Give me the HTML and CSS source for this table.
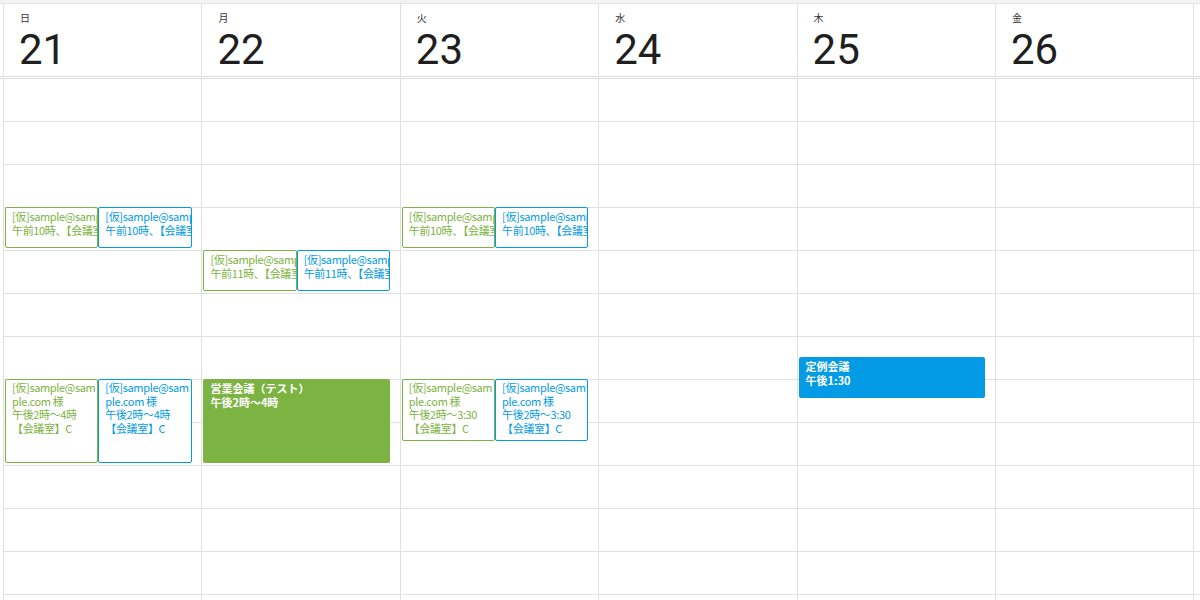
FILE: index.html
```html
<!DOCTYPE html>
<html lang="ja">
<head>
<meta charset="utf-8">
<title>週表示カレンダー</title>
<link rel="stylesheet" href="styles.css">
</head>
<body>
<div class="cal">
  <div class="head">
    <div class="gutter"></div>
    <div class="hcell"><div class="dow">日</div><div class="num">21</div></div>
    <div class="hcell"><div class="dow">月</div><div class="num">22</div></div>
    <div class="hcell"><div class="dow">火</div><div class="num">23</div></div>
    <div class="hcell"><div class="dow">水</div><div class="num">24</div></div>
    <div class="hcell"><div class="dow">木</div><div class="num">25</div></div>
    <div class="hcell"><div class="dow">金</div><div class="num">26</div></div>
    <div class="hcell"><div class="dow">土</div><div class="num">27</div></div>
  </div>
  <div class="grid">
    <div class="gutter"></div>
    <!-- 日 21 -->
    <div class="col">
      <div class="slot"></div><div class="slot"></div><div class="slot"></div><div class="slot"></div><div class="slot"></div><div class="slot"></div><div class="slot"></div><div class="slot"></div><div class="slot"></div><div class="slot"></div><div class="slot"></div><div class="slot"></div><div class="slot"></div>
      <div class="events">
        <div class="ev ev-out green short" style="top:128px;height:41px;left:0;width:50%">
          <div class="line">[仮]sample@sample.com 様</div>
          <div class="line">午前10時、【会議室】C</div>
        </div>
        <div class="ev ev-out blue short" style="top:128px;height:41px;left:50%;width:50%">
          <div class="line">[仮]sample@sample.com 様</div>
          <div class="line">午前10時、【会議室】C</div>
        </div>
        <div class="ev ev-out green" style="top:300px;height:84px;left:0;width:50%">
          <div class="wrap">[仮]sample@sample.com 様</div>
          <div class="wrap">午後2時～4時 【会議室】C</div>
        </div>
        <div class="ev ev-out blue" style="top:300px;height:84px;left:50%;width:50%">
          <div class="wrap">[仮]sample@sample.com 様</div>
          <div class="wrap">午後2時～4時 【会議室】C</div>
        </div>
      </div>
    </div>
    <!-- 月 22 -->
    <div class="col">
      <div class="slot"></div><div class="slot"></div><div class="slot"></div><div class="slot"></div><div class="slot"></div><div class="slot"></div><div class="slot"></div><div class="slot"></div><div class="slot"></div><div class="slot"></div><div class="slot"></div><div class="slot"></div><div class="slot"></div>
      <div class="events">
        <div class="ev ev-out green short" style="top:171px;height:41px;left:0;width:50%">
          <div class="line">[仮]sample@sample.com 様</div>
          <div class="line">午前11時、【会議室】C</div>
        </div>
        <div class="ev ev-out blue short" style="top:171px;height:41px;left:50%;width:50%">
          <div class="line">[仮]sample@sample.com 様</div>
          <div class="line">午前11時、【会議室】C</div>
        </div>
        <div class="ev ev-fill green-fill" style="top:300px;height:84px;left:0;width:100%">
          <div class="wrap">営業会議（テスト）</div>
          <div class="wrap">午後2時～4時</div>
        </div>
      </div>
    </div>
    <!-- 火 23 -->
    <div class="col">
      <div class="slot"></div><div class="slot"></div><div class="slot"></div><div class="slot"></div><div class="slot"></div><div class="slot"></div><div class="slot"></div><div class="slot"></div><div class="slot"></div><div class="slot"></div><div class="slot"></div><div class="slot"></div><div class="slot"></div>
      <div class="events">
        <div class="ev ev-out green short" style="top:128px;height:41px;left:0;width:50%">
          <div class="line">[仮]sample@sample.com 様</div>
          <div class="line">午前10時、【会議室】C</div>
        </div>
        <div class="ev ev-out blue short" style="top:128px;height:41px;left:50%;width:50%">
          <div class="line">[仮]sample@sample.com 様</div>
          <div class="line">午前10時、【会議室】C</div>
        </div>
        <div class="ev ev-out green" style="top:300px;height:62px;left:0;width:50%">
          <div class="wrap">[仮]sample@sample.com 様</div>
          <div class="wrap">午後2時～3:30 【会議室】C</div>
        </div>
        <div class="ev ev-out blue" style="top:300px;height:62px;left:50%;width:50%">
          <div class="wrap">[仮]sample@sample.com 様</div>
          <div class="wrap">午後2時～3:30 【会議室】C</div>
        </div>
      </div>
    </div>
    <!-- 水 24 -->
    <div class="col">
      <div class="slot"></div><div class="slot"></div><div class="slot"></div><div class="slot"></div><div class="slot"></div><div class="slot"></div><div class="slot"></div><div class="slot"></div><div class="slot"></div><div class="slot"></div><div class="slot"></div><div class="slot"></div><div class="slot"></div>
    </div>
    <!-- 木 25 -->
    <div class="col">
      <div class="slot"></div><div class="slot"></div><div class="slot"></div><div class="slot"></div><div class="slot"></div><div class="slot"></div><div class="slot"></div><div class="slot"></div><div class="slot"></div><div class="slot"></div><div class="slot"></div><div class="slot"></div><div class="slot"></div>
      <div class="events">
        <div class="ev ev-fill blue-fill" style="top:278px;height:41px;left:0;width:100%">
          <div class="wrap">定例会議</div>
          <div class="wrap">午後1:30</div>
        </div>
      </div>
    </div>
    <!-- 金 26 -->
    <div class="col">
      <div class="slot"></div><div class="slot"></div><div class="slot"></div><div class="slot"></div><div class="slot"></div><div class="slot"></div><div class="slot"></div><div class="slot"></div><div class="slot"></div><div class="slot"></div><div class="slot"></div><div class="slot"></div><div class="slot"></div>
    </div>
    <!-- 土 27 -->
    <div class="col">
      <div class="slot"></div><div class="slot"></div><div class="slot"></div><div class="slot"></div><div class="slot"></div><div class="slot"></div><div class="slot"></div><div class="slot"></div><div class="slot"></div><div class="slot"></div><div class="slot"></div><div class="slot"></div><div class="slot"></div>
    </div>
  </div>
</div>
</body>
</html>
```

FILE: styles.css
```css
html, body {
  margin: 0;
  padding: 0;
  overflow: hidden;
  background: #fff;
}

body {
  font-family: Roboto, "Noto Sans CJK JP", sans-serif;
  color: #212121;
  width: 1200px;
  height: 600px;
}

.cal {
  width: 1393px;
  background: #f3f3f3;
  padding-top: 3px;
}

.head,
.grid {
  display: grid;
  grid-template-columns: 4px repeat(7, 198.4px);
  background: #fff;
}

.head {
  border-top: 1px solid #e2e2e2;
  border-bottom: 1px solid #dcdcdc;
  height: 72px;
}

.grid {
  margin-top: 1px;
  border-top: 1px solid #dcdcdc;
  box-shadow: 0 -1px 0 #fff;
}

.gutter {
  border-right: 1px solid #e0e0e0;
}

.hcell {
  border-right: 1px solid #e0e0e0;
  padding-left: 16px;
}

.dow {
  font-size: 10px;
  line-height: 12px;
  margin-top: 8px;
  color: #333;
  font-family: "Noto Sans CJK JP", sans-serif;
}

.num {
  font-size: 42px;
  line-height: 42px;
  margin-top: 5px;
  margin-left: -1px;
  color: #1f1f1f;
}

.col {
  position: relative;
  border-right: 1px solid #e0e0e0;
  display: flex;
  flex-direction: column;
}

.slot {
  height: 42px;
  border-bottom: 1px solid #e0e0e0;
  flex: none;
}

.events {
  position: absolute;
  top: 0;
  left: 1px;
  width: 186.6px;
  height: 100%;
}

.ev {
  position: absolute;
  box-sizing: border-box;
  overflow: hidden;
  font-size: 11px;
  line-height: 14px;
  border-radius: 2px;
  font-family: "Noto Sans CJK JP", sans-serif;
}

.ev-out {
  background: #fff;
  border: 1px solid;
  padding: 1px 0 0 6px;
  letter-spacing: -0.35px;
}

.ev-out .wrap {
  line-height: 13.7px;
}

.ev-out.short .line {
  white-space: nowrap;
}

.ev .wrap {
  word-break: break-all;
}

.green {
  border-color: #7cb342;
  color: #7cb342;
}

.blue {
  border-color: #039be5;
  color: #039be5;
}

.ev-fill {
  color: #fff;
  font-weight: bold;
  padding: 2px 7px 0;
}

.green-fill {
  background: #7cb342;
}

.blue-fill {
  background: #039be5;
}
```
